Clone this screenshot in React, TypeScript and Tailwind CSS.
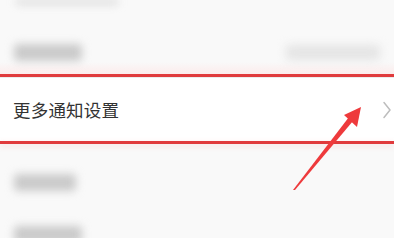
function BlurRow({ left, right }: { left: string; right?: string }) {
    return (
        <div className="flex h-[20px] items-center justify-between px-[14px]">
            <div className={`h-[17px] ${left} rounded-sm bg-[#cacaca] blur-[4px]`} />
            {right && <div className={`h-[15px] ${right} rounded-sm bg-[#e4e4e4] blur-[5px]`} />}
        </div>
    )
}

export default function App() {
    return (
        <div className="relative w-[394px] h-[238px] overflow-hidden bg-[#f9f9f9] font-['Noto_Sans_CJK_SC',sans-serif]">
            <div className="flex flex-col">
                <div className="h-[10px] flex items-start px-[16px]">
                    <div className="h-[4px] w-[102px] bg-[#d0d0d0] blur-[4px]" />
                </div>
                <div className="h-[32px]" />
                <BlurRow left="w-[68px]" right="w-[94px]" />
                <div className="h-[12px] bg-gradient-to-b from-transparent to-[#fcecec]" />
                <div className="h-[3px] bg-[#e03b3d]" />
                <div className="bg-white h-[64px] flex items-center justify-between pl-[13px] pr-[2px] border-t border-[#ececec]">
                    <span className="text-[17.5px] leading-none text-[#333333] tracking-[0.2px]">更多通知设置</span>
                    <svg width="10" height="18" viewBox="0 0 10 18" className="mr-[0px]">
                        <polyline points="2,1.5 8,9 2,16.5" fill="none" stroke="#bdbdbd" strokeWidth="1.5" strokeLinecap="round" strokeLinejoin="round" />
                    </svg>
                </div>
                <div className="h-[3px] bg-[#e03b3d] shadow-[0_2px_6px_rgba(224,59,61,0.15)]" />
                <div className="h-[28px]" />
                <BlurRow left="w-[62px]" />
                <div className="h-[32px]" />
                <BlurRow left="w-[68px]" />
            </div>

            <svg className="absolute left-0 top-0" width="394" height="238" viewBox="0 0 394 238">
                <polygon points="293,190 295,190 353,121 349,117" fill="#ee3a3c" />
                <polygon points="361,107 344,115 357,127" fill="#ee3a3c" />
            </svg>
        </div>
    )
}
